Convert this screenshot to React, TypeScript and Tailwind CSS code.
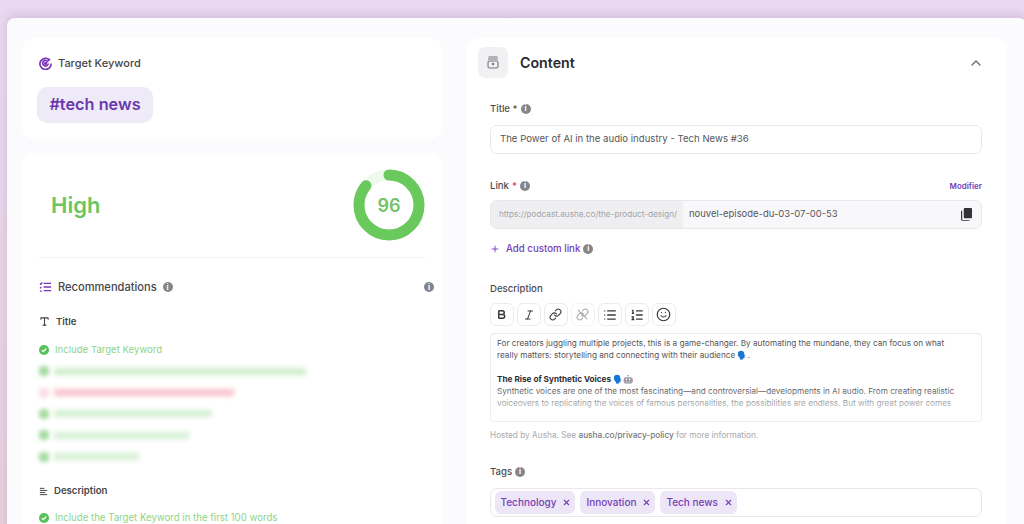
import React from "react";
import { Bold, Italic, Link, List, ListOrdered, Smile, ChevronUp, Plus, X, Type } from "lucide-react";

const F = "font-['Inter','Liberation_Sans',sans-serif]";

function I({ cls = "" }: { cls?: string }) {
  return (
    <span className={`inline-flex h-[10px] w-[10px] items-center justify-center rounded-full bg-[#858589] text-[7.5px] font-bold leading-none text-white ${cls}`}>i</span>
  );
}

function Chk() {
  return (
    <span className="flex h-[10px] w-[10px] shrink-0 items-center justify-center rounded-full bg-[#57c058]">
      <svg viewBox="0 0 10 10" className="h-[8px] w-[8px]" fill="none" stroke="white" strokeWidth="1.6"><path d="M2.2 5.2 4.2 7 7.8 3.2" /></svg>
    </span>
  );
}

function Blur({ w, color, dot }: { w: number; color: string; dot: string }) {
  return (
    <div className="flex h-[21.4px] items-center gap-[5px]">
      <span className={`h-[10px] w-[10px] shrink-0 rounded-sm blur-[2px] ${dot}`} />
      <span className={`h-[7px] blur-[2.5px] ${color}`} style={{ width: w }} />
    </div>
  );
}

function Tool({ children, faded }: { children: React.ReactNode; faded?: boolean }) {
  return (
    <span className={`flex h-[23px] w-[23.5px] items-center justify-center rounded-[6px] border bg-white ${faded ? "border-[#f4f4f6] text-[#a9a9ae]" : "border-[#ebebee] text-[#38383c]"}`}>
      {children}
    </span>
  );
}

function Tag({ t }: { t: string }) {
  return (
    <span className="flex h-[23px] items-center gap-[6px] rounded-[6px] bg-[#ece6f7] pl-[6px] pr-[4px] text-[10px] font-medium text-[#7541b8]">
      {t}
      <X size={9} strokeWidth={3} />
    </span>
  );
}

export default function App() {
  return (
    <div className={`${F} h-[524px] w-[1024px] overflow-hidden bg-gradient-to-b from-[#e8d8f0] to-[#e6d0da] pl-[7px] pt-[18px]`}>
      <div className="flex h-[530px] w-[1020px] gap-[25px] rounded-t-[8px] bg-[#fbfafc] pl-[15px] pt-[20px] shadow-[0_-3px_8px_rgba(150,110,170,0.25)]">
        <div className="flex w-[420px] shrink-0 flex-col gap-[14px]">
          <section className="flex h-[101px] flex-col rounded-[12px] bg-white pl-[15px] pt-[17px]">
            <div className="flex items-center gap-[6px] pl-[2px] text-[11px] font-medium text-[#46464a]">
              <svg viewBox="0 0 14 14" className="h-[13px] w-[13px]" fill="none" stroke="#7b35b5" strokeWidth="1.8"><path d="M11.5 3.4A6 6 0 1 0 13 7" /><path d="M9.6 5.2A3 3 0 1 0 10 7" /><circle cx="7" cy="7" r="0.8" fill="#7b35b5" /><path d="M7 7 12 2" strokeWidth="1.3" /></svg>
              Target Keyword
            </div>
            <span className="mt-[15px] flex h-[36px] w-[116px] items-center justify-center rounded-[10px] bg-[#eeeaf7] text-[16.3px] font-semibold text-[#6c39ad]">#tech news</span>
          </section>
          <section className="flex-1 rounded-t-[12px] bg-white pl-[17px] pr-[7px] pt-[16px]">
            <div className="flex h-[72px] items-center justify-between pl-[12px] pr-[10px]">
              <span className="text-[22px] font-semibold text-[#6cc55f]">High</span>
              <div className="relative h-[72px] w-[72px]">
                <svg viewBox="0 0 72 72" className="h-full w-full">
                  <circle cx="36" cy="36" r="30" fill="none" stroke="#f0f9ee" strokeWidth="11" />
                  <circle cx="36" cy="36" r="30" fill="none" stroke="#69c95c" strokeWidth="11" strokeLinecap="round" strokeDasharray="162 188.5" transform="rotate(-90 36 36)" />
                </svg>
                <span className="absolute inset-0 flex items-center justify-center text-[18px] font-semibold text-[#72c46a]">96</span>
              </div>
            </div>
            <div className="mr-[10px] mt-[16px] border-t border-[#f3f3f5]" />
            <div className="mt-[21px] flex items-center justify-between pr-[1px]">
              <div className="flex items-center gap-[6px] text-[11.1px] font-medium text-[#46464a]">
                <svg viewBox="0 0 14 12" className="h-[12px] w-[13px]" fill="none" stroke="#7b35b5" strokeWidth="1.4"><path d="M5 2h8M5 6h8M5 10h8" /><path d="M1 2.2 2 3l1.5-2M1 7.5l1.5-1.5M1 10.5h2" /></svg>
                <span>Recommendations</span>
                <I />
              </div>
              <I />
            </div>
            <div className="mt-[19px] flex items-center gap-[6px] text-[9.6px] font-semibold text-[#46464a]">
              <Type size={11} strokeWidth={2.4} />
              Title
            </div>
            <div className="mt-[10px] flex flex-col">
              <div className="flex h-[21.4px] items-center gap-[6px] text-[9.6px] text-[#8ed486]"><Chk />Include Target Keyword</div>
              <Blur w={252} color="bg-[#cfeecb]" dot="bg-[#a5dca0]" />
              <Blur w={180} color="bg-[#f8c2ce]" dot="bg-[#fbdce3]" />
              <Blur w={158} color="bg-[#d3f0d0]" dot="bg-[#a5dca0]" />
              <Blur w={135} color="bg-[#d6f0d3]" dot="bg-[#a5dca0]" />
              <Blur w={85} color="bg-[#d6f0d3]" dot="bg-[#a5dca0]" />
            </div>
            <div className="mt-[17px] flex items-center gap-[6px] text-[9.6px] font-semibold text-[#46464a]">
              <svg viewBox="0 0 10 10" className="h-[9px] w-[9px]" fill="none" stroke="#46464a" strokeWidth="1.1"><path d="M1 1.5h5M1 3.8h8M1 6.2h6M1 8.5h8" /></svg>
              Description
            </div>
            <div className="mt-[12px] flex items-center gap-[6px] text-[9.65px] text-[#8ed486]"><Chk />Include the Target Keyword in the first 100 words</div>
          </section>
        </div>
        <section className="w-[540px] shrink-0 rounded-t-[12px] bg-white pl-[23px] pr-[25px]">
          <div className="-ml-[12px] flex h-[40px] items-center pt-[9px]">
            <span className="flex h-[31px] w-[30px] items-center justify-center rounded-[7px] bg-[#f1f1f3]">
              <svg viewBox="0 0 12 13" className="h-[13px] w-[12px]" fill="none" stroke="#77777c" strokeWidth="1.1"><path d="M1.5 1h9M1 3h10" /><rect x="1" y="5" width="10" height="7" rx="1.5" /><circle cx="6" cy="8" r="0.7" fill="#77777c" /></svg>
            </span>
            <span className="ml-[12px] text-[14.2px] font-semibold text-[#29292c]">Content</span>
            <ChevronUp size={16} className="-mr-[2px] ml-auto text-[#6d6d72]" />
          </div>
          <div className="mt-[25px] flex h-[12px] items-center gap-[3px] text-[9.6px] font-medium text-[#4c4c50]">Title * <I /></div>
          <div className="mt-[10px] flex h-[29px] items-center rounded-[7px] border border-[#e8e8eb] bg-white pl-[9px] text-[9.6px] text-[#55555a]">The Power of AI in the audio industry - Tech News #36</div>
          <div className="mt-[26px] flex h-[12px] items-center justify-between">
            <span className="flex items-center gap-[3px] text-[9.6px] font-medium text-[#4c4c50]">Link <span className="text-[#c0395a]">*</span> <I /></span>
            <span className="text-[8px] font-semibold text-[#7541b8]">Modifier</span>
          </div>
          <div className="mt-[8px] flex h-[29px] items-center overflow-hidden rounded-[7px] border border-[#e8e8eb] bg-[#f8f8fa]">
            <span className="flex h-full w-[192px] shrink-0 items-center whitespace-nowrap bg-[#efeff1] pl-[8px] text-[8.2px] text-[#a4a4a8]">https://podcast.ausha.co/the-product-design/</span>
            <span className="pl-[6px] text-[9.45px] text-[#55555a]">nouvel-episode-du-03-07-00-53</span>
            <svg viewBox="0 0 12 14" className="ml-auto mr-[9px] h-[13px] w-[11px]" fill="#333336"><path d="M4 0h7a1 1 0 0 1 1 1v9a1 1 0 0 1-1 1H4a1 1 0 0 1-1-1V1a1 1 0 0 1 1-1Z" /><path d="M1.3 3v9.2c0 .4.3.7.7.7h7.2v1H1.6A1.6 1.6 0 0 1 0 12.3V3Z" /></svg>
          </div>
          <div className="mt-[14px] flex h-[12px] items-center gap-[3px] text-[9.7px] font-medium text-[#7541b8]">
            <Plus size={10} strokeWidth={2.2} className="mr-[3px]" />Add custom link <I />
          </div>
          <div className="mt-[27px] h-[12px] text-[9.6px] font-medium text-[#4c4c50]">Description</div>
          <div className="mt-[9px] flex gap-[3.5px]">
            <Tool><Bold size={11} strokeWidth={3.2} /></Tool>
            <Tool><Italic size={12} strokeWidth={2} /></Tool>
            <Tool><Link size={13} strokeWidth={2} /></Tool>
            <Tool faded>
              <svg viewBox="0 0 24 24" className="h-[13px] w-[13px]" fill="none" stroke="currentColor" strokeWidth="2" strokeLinecap="round"><path d="M10 13a5 5 0 0 0 7.54.54l3-3a5 5 0 0 0-7.07-7.07l-1.72 1.71" /><path d="M14 11a5 5 0 0 0-7.54-.54l-3 3a5 5 0 0 0 7.07 7.07l1.71-1.71" /><path d="m4 4 16 16" /></svg>
            </Tool>
            <Tool><List size={14} strokeWidth={2.2} /></Tool>
            <Tool><ListOrdered size={14} strokeWidth={2.2} /></Tool>
            <Tool><Smile size={15} strokeWidth={1.9} /></Tool>
          </div>
          <div className="relative mt-[7px] h-[89px] overflow-hidden rounded-[4px] border border-[#ececef] bg-white pl-[6px] pr-[20px] pt-[3px] text-[8.2px] leading-[12px] text-[#55555a]">
            <p>For creators juggling multiple projects, this is a game-changer. By automating the mundane, they can focus on what really matters: storytelling and connecting with their audience 🗣️.</p>
            <p className="mt-[12px] font-bold text-[#2d2d30]">The Rise of Synthetic Voices 🗣️🤖</p>
            <p>Synthetic voices are one of the most fascinating—and controversial—developments in AI audio. From creating realistic voiceovers to replicating the voices of famous personalities, the possibilities are endless. But with great power comes</p>
            <div className="absolute inset-x-0 bottom-0 h-[34px] bg-gradient-to-b from-transparent to-white" />
          </div>
          <div className="mt-[8px] h-[10px] text-[8.25px] leading-[10px] text-[#a9a9ae]">Hosted by Ausha. See <span className="font-medium text-[#77777c]">ausha.co/privacy-policy</span> for more information.</div>
          <div className="mt-[26px] flex h-[12px] items-center gap-[3px] text-[9.6px] font-medium text-[#4c4c50]">Tags <I /></div>
          <div className="mt-[10px] flex h-[29px] items-center gap-[5px] rounded-[7px] border border-[#e8e8eb] bg-white pl-[3.5px]">
            <Tag t="Technology" /><Tag t="Innovation" /><Tag t="Tech news" />
          </div>
        </section>
      </div>
    </div>
  );
}
